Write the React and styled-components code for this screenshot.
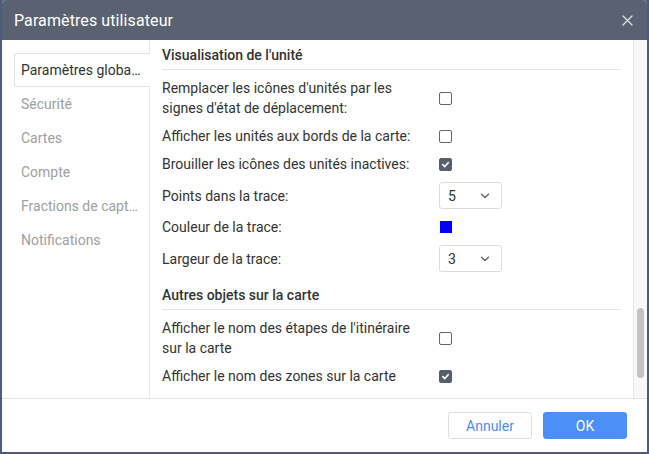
import React from "react";
import styled, { createGlobalStyle } from "styled-components";

const Global = createGlobalStyle`
  html, body { margin: 0; padding: 0; }
  body {
    background: #4b5c80;
    font-family: Roboto, "Liberation Sans", Arial, sans-serif;
    font-size: 14px;
    color: #333;
  }
  * { box-sizing: border-box; }
`;

const Dialog = styled.div`
  margin: 0 2px 0 2px;
  width: 645px;
  height: 452px;
  background: #fff;
  border-radius: 4px 4px 0 0;
  overflow: hidden;
  display: flex;
  flex-direction: column;
`;

const Header = styled.div`
  height: 40px;
  flex: none;
  background: #5a6271;
  color: #fff;
  display: flex;
  align-items: center;
  justify-content: space-between;
  padding: 0 12px 0 12px;
`;

const Title = styled.div`
  font-size: 16px;
  letter-spacing: 0.1px;
`;

const Close = styled.button`
  border: 0;
  background: none;
  padding: 0;
  width: 16px;
  height: 16px;
  display: flex;
  align-items: center;
  justify-content: center;
  color: #dde0e5;
`;

const Body = styled.div`
  flex: 1;
  display: flex;
  min-height: 0;
  border-bottom: 1px solid #e4e4e4;
`;

const Sidebar = styled.div`
  width: 148px;
  flex: none;
  padding: 13px 0 0 12px;
  border-right: 1px solid #e6e6e6;
  display: flex;
  flex-direction: column;
`;

const NavItem = styled.div`
  height: 34px;
  display: flex;
  align-items: center;
  padding-left: 6px;
  white-space: nowrap;
  overflow: hidden;
  color: ${(p) => (p.$active ? "#333" : "#a0a0a0")};
  background: ${(p) => (p.$active ? "#fff" : "transparent")};
  border: 1px solid ${(p) => (p.$active ? "#e2e2e2" : "transparent")};
  border-right: 0;
  border-radius: 3px 0 0 3px;
  margin-right: ${(p) => (p.$active ? "-1px" : "0")};
  position: relative;
  z-index: 1;
`;

const NavText = styled.span`
  max-width: 120px;
  overflow: hidden;
  text-overflow: ellipsis;
`;

const Content = styled.div`
  flex: 1;
  padding: 5px 13px 0 12px;
  overflow: hidden;
`;

const Section = styled.div`
  margin-bottom: 13px;
`;

const SectionTitle = styled.div`
  font-weight: 500;
  line-height: 20px;
  padding-bottom: 4px;
  border-bottom: 1px solid #e3e3e3;
  margin-bottom: 8px;
`;

const Rows = styled.div`
  display: flex;
  flex-direction: column;
  gap: 8px;
`;

const Row = styled.div`
  display: grid;
  grid-template-columns: 277px auto;
  align-items: center;
`;

const Label = styled.div`
  line-height: 20px;
  color: #333;
  max-width: 255px;
`;

const Box = styled.span`
  width: 13px;
  height: 13px;
  border-radius: 2px;
  display: inline-flex;
  align-items: center;
  justify-content: center;
  border: 1.5px solid ${(p) => (p.$checked ? "#575e6c" : "#5f6673")};
  background: ${(p) => (p.$checked ? "#575e6c" : "#fff")};
`;

const Checkbox = ({ checked }) => (
  <Box $checked={checked}>
    {checked && (
      <svg width="9" height="9" viewBox="0 0 10 10">
        <path d="M2 5.2 L4.2 7.3 L8 3" fill="none" stroke="#fff" strokeWidth="1.8" strokeLinecap="round" strokeLinejoin="round" />
      </svg>
    )}
  </Box>
);

const SelectBox = styled.div`
  width: 63px;
  height: 27px;
  border: 1px solid #dcdcdc;
  border-radius: 3px;
  display: flex;
  align-items: center;
  justify-content: space-between;
  padding: 0 11px 0 8px;
  color: #333;
`;

const Select = ({ value }) => (
  <SelectBox>
    <span>{value}</span>
    <svg width="10" height="6" viewBox="0 0 10 6">
      <path d="M1.5 1.2 L5 4.6 L8.5 1.2" fill="none" stroke="#666" strokeWidth="1.4" strokeLinecap="round" strokeLinejoin="round" />
    </svg>
  </SelectBox>
);

const Swatch = styled.span`
  width: 12px;
  height: 12px;
  background: ${(p) => p.$color};
  display: inline-block;
  margin-left: 1px;
`;

const Track = styled.div`
  width: 14px;
  flex: none;
  background: #f8f8f8;
  border-left: 1px solid #e8e8e8;
  padding: 268px 0 0 3px;
`;

const Thumb = styled.div`
  width: 7px;
  height: 70px;
  border-radius: 4px;
  background: #c2c2c2;
`;

const Footer = styled.div`
  height: 53px;
  flex: none;
  display: flex;
  align-items: center;
  justify-content: flex-end;
  gap: 11px;
  padding-right: 20px;
`;

const Button = styled.button`
  width: 84px;
  height: 27px;
  border-radius: 3px;
  font-family: inherit;
  font-size: 14px;
  border: 1px solid ${(p) => (p.$primary ? "#4a90f6" : "#dedede")};
  background: ${(p) => (p.$primary ? "#4a90f6" : "#fff")};
  color: ${(p) => (p.$primary ? "#fff" : "#4a8ef3")};
  padding: 0;
`;

const nav = [
  "Paramètres globaux",
  "Sécurité",
  "Cartes",
  "Compte",
  "Fractions de capteurs",
  "Notifications",
];

export default function App() {
  return (
    <>
      <Global />
      <Dialog>
        <Header>
          <Title>Paramètres utilisateur</Title>
          <Close aria-label="close">
            <svg width="11" height="11" viewBox="0 0 11 11">
              <path d="M1 1 L10 10 M10 1 L1 10" stroke="currentColor" strokeWidth="1.3" strokeLinecap="round" />
            </svg>
          </Close>
        </Header>
        <Body>
          <Sidebar>
            {nav.map((n, i) => (
              <NavItem key={n} $active={i === 0}>
                <NavText>{n}</NavText>
              </NavItem>
            ))}
          </Sidebar>
          <Content>
            <Section>
              <SectionTitle>Visualisation de l'unité</SectionTitle>
              <Rows>
                <Row>
                  <Label>Remplacer les icônes d'unités par les signes d'état de déplacement:</Label>
                  <Checkbox />
                </Row>
                <Row>
                  <Label>Afficher les unités aux bords de la carte:</Label>
                  <Checkbox />
                </Row>
                <Row>
                  <Label>Brouiller les icônes des unités inactives:</Label>
                  <Checkbox checked />
                </Row>
                <Row>
                  <Label>Points dans la trace:</Label>
                  <Select value="5" />
                </Row>
                <Row>
                  <Label>Couleur de la trace:</Label>
                  <Swatch $color="#0000ff" />
                </Row>
                <Row>
                  <Label>Largeur de la trace:</Label>
                  <Select value="3" />
                </Row>
              </Rows>
            </Section>
            <Section>
              <SectionTitle>Autres objets sur la carte</SectionTitle>
              <Rows>
                <Row>
                  <Label>Afficher le nom des étapes de l'itinéraire sur la carte</Label>
                  <Checkbox />
                </Row>
                <Row>
                  <Label>Afficher le nom des zones sur la carte</Label>
                  <Checkbox checked />
                </Row>
              </Rows>
            </Section>
          </Content>
          <Track>
            <Thumb />
          </Track>
        </Body>
        <Footer>
          <Button>Annuler</Button>
          <Button $primary>OK</Button>
        </Footer>
      </Dialog>
    </>
  );
}
